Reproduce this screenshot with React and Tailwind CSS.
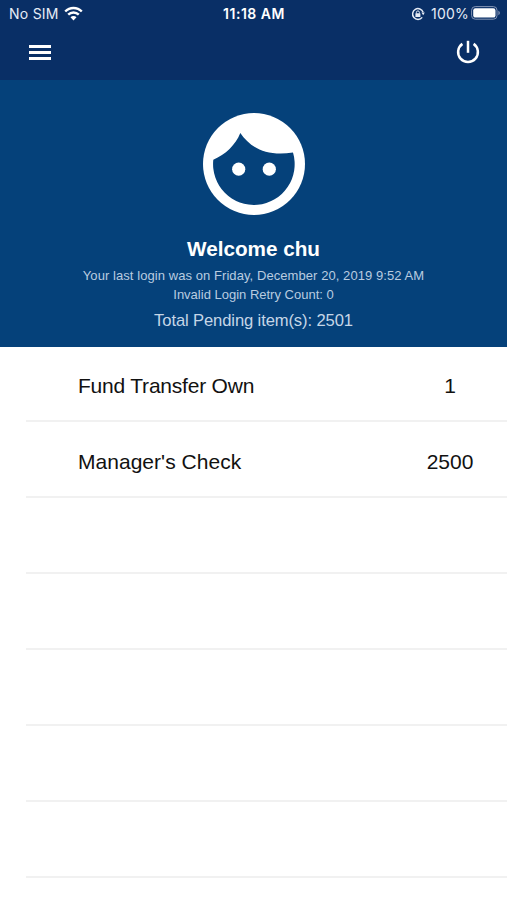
import React from "react";

const items = [
  { name: "Fund Transfer Own", count: "1", tracking: "tracking-[-0.21px]" },
  { name: "Manager's Check", count: "2500", tracking: "tracking-[0.03px]" },
  { name: "", count: "" },
  { name: "", count: "" },
  { name: "", count: "" },
  { name: "", count: "" },
  { name: "", count: "" },
];

const WifiIcon = () => (
  <svg className="w-[19px] h-[15px] ml-[5px] -mt-[2px]" viewBox="0 0 19 15" fill="none" stroke="#fff" strokeWidth="2.4">
    <path d="M1.2 5.5a11.7 11.7 0 0 1 16.6 0" />
    <path d="M4.2 8.7a7.5 7.5 0 0 1 10.6 0" />
    <path d="M9.5 14.4 6.5 11.3a4.25 4.25 0 0 1 6 0z" fill="#fff" stroke="none" />
  </svg>
);

const LockIcon = () => (
  <svg className="w-[14px] h-[14px]" viewBox="0 0 14 14" fill="none" stroke="#e6ecf6">
    <path d="M12.1 5.2A5.4 5.4 0 1 0 11.2 10.4" strokeWidth="1.5" />
    <path d="M10.4 5.6h3.4l-1.6 2.6z" fill="#e6ecf6" stroke="none" />
    <rect x="4.4" y="6.2" width="5" height="3.8" rx="0.5" fill="#e6ecf6" stroke="none" />
    <path d="M5.4 6.5V5.4a1.5 1.5 0 0 1 3 0v1.1" strokeWidth="1" />
  </svg>
);

const BatteryIcon = () => (
  <svg className="w-[30px] h-[14px] ml-[2px] -mt-[2px]" viewBox="0 0 30 14">
    <rect x="0.6" y="0.6" width="25.4" height="12.6" rx="3.6" fill="none" stroke="#8595b5" />
    <rect x="2.2" y="2.2" width="22.3" height="9.4" rx="2.2" fill="#fff" />
    <path d="M27.4 4.8c1.9.7 1.9 3.7 0 4.4z" fill="#8595b5" />
  </svg>
);

const PowerIcon = () => (
  <svg className="w-6 h-6" viewBox="0 0 24 24" fill="none" stroke="#fff" strokeWidth="2.5">
    <path d="M12 .8v12" />
    <path d="M6.4 3.9a9.9 9.9 0 1 0 11.2 0" />
  </svg>
);

const FaceIcon = () => (
  <svg className="w-[102px] h-[102px]" viewBox="0 0 102 102">
    <circle cx="51" cy="51" r="51" fill="#fff" />
    <path
      d="M10.3 46.8C22.5 41.5 32.5 32 37.3 20C46.5 33.5 62 44 90 39.6A40.8 40.8 0 1 1 10.3 46.8z"
      fill="#05417a"
    />
    <circle cx="35.7" cy="56.2" r="6.6" fill="#fff" />
    <circle cx="66.3" cy="56.2" r="6.6" fill="#fff" />
  </svg>
);

const App = () => {
  return (
    <div className="w-full h-[900px] overflow-hidden bg-white font-['Liberation_Sans',Arial,sans-serif]">
      <header className="h-20 bg-[#092f66]">
        <div className="grid grid-cols-3 items-center h-7 pl-[9px] pr-[6px] font-['Inter',sans-serif] text-[14px] text-[#e6ecf6]">
          <div className="flex items-center whitespace-nowrap">
            <span className="-mt-[2px] tracking-[0.25px]">No SIM</span>
            <WifiIcon />
          </div>
          <div className="-mt-[2px] -ml-[2px] text-center font-semibold tracking-[0.5px] text-white">11:18 AM</div>
          <div className="flex items-center justify-end">
            <LockIcon />
            <span className="ml-[6px] -mt-[2px] tracking-[0.2px]">100%</span>
            <BatteryIcon />
          </div>
        </div>
        <div className="flex items-center justify-between h-12 pl-[29px] pr-[27px]">
          <button className="flex flex-col gap-[3px]">
            <span className="block w-[22px] h-[3px] bg-white" />
            <span className="block w-[22px] h-[3px] bg-white" />
            <span className="block w-[22px] h-[3px] bg-white" />
          </button>
          <button>
            <PowerIcon />
          </button>
        </div>
      </header>

      <section className="flex flex-col items-center h-[266.5px] pt-[33.4px] bg-[#05417a] whitespace-nowrap">
        <FaceIcon />
        <h1 className="mt-[22px] text-[20.7px] leading-6 font-bold text-white">Welcome chu</h1>
        <p className="mt-[6px] text-[13px] leading-[18px] tracking-[0.07px] text-[#b9cce0]">
          Your last login was on Friday, December 20, 2019 9:52 AM
        </p>
        <p className="mt-[1px] text-[13px] leading-[18px] text-[#b9cce0]">Invalid Login Retry Count: 0</p>
        <p className="mt-[7px] text-[16.6px] leading-5 tracking-[-0.12px] text-[#c5d6e7]">Total Pending item(s): 2501</p>
      </section>

      <ul>
        {items.map((item, index) => (
          <li
            key={index}
            className="flex items-center justify-between h-[75.9px] ml-[26px] pt-[5px] pl-[52px] border-b-2 border-[#f1f1f1] text-[21px] text-[#111]"
          >
            <span className={item.tracking}>{item.name}</span>
            <span className="w-[114px] text-center">{item.count}</span>
          </li>
        ))}
      </ul>
    </div>
  );
};

export default App;
